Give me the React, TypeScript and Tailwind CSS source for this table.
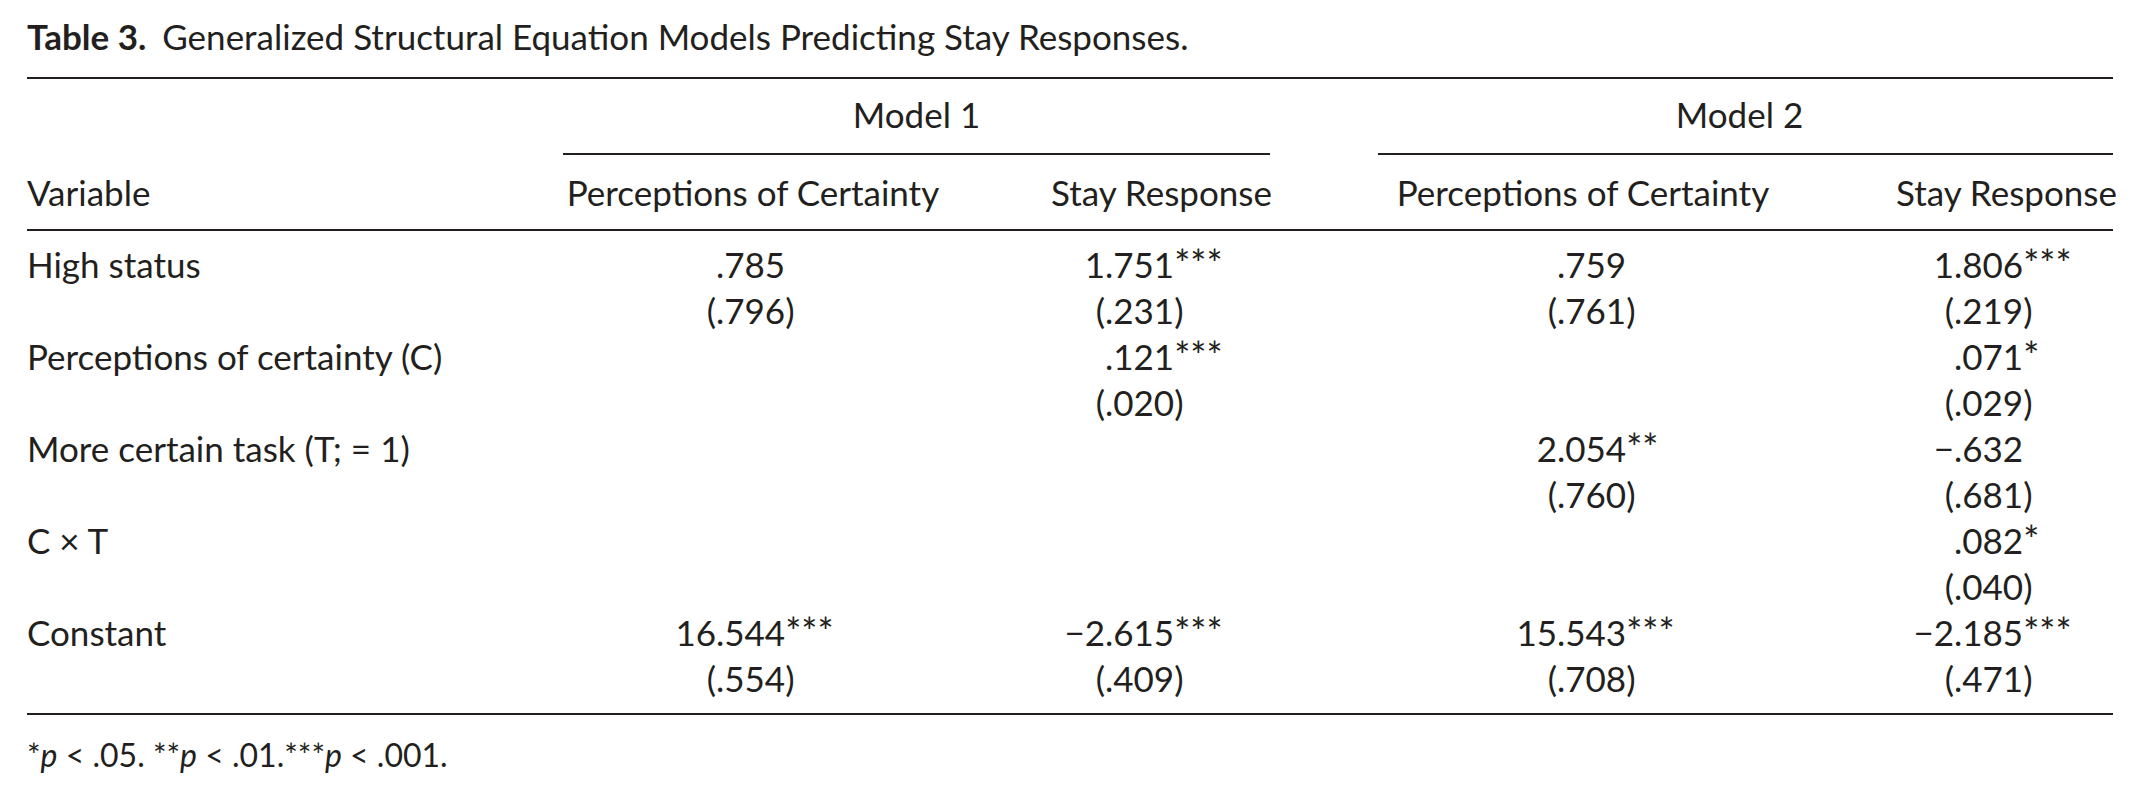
import React from 'react';

type Cell = { v: string; s?: string } | null;

interface Row {
  label: string;
  cells: [Cell, Cell, Cell, Cell];
  errors: [string | null, string | null, string | null, string | null];
}

const rows: Row[] = [
  {
    label: 'High status',
    cells: [{ v: '.785' }, { v: '1.751', s: '***' }, { v: '.759' }, { v: '1.806', s: '***' }],
    errors: ['(.796)', '(.231)', '(.761)', '(.219)'],
  },
  {
    label: 'Perceptions of certainty (C)',
    cells: [null, { v: '.121', s: '***' }, null, { v: '.071', s: '*' }],
    errors: [null, '(.020)', null, '(.029)'],
  },
  {
    label: 'More certain task (T; = 1)',
    cells: [null, null, { v: '2.054', s: '**' }, { v: '\u2212.632' }],
    errors: [null, null, '(.760)', '(.681)'],
  },
  {
    label: 'C \u00d7 T',
    cells: [null, null, null, { v: '.082', s: '*' }],
    errors: [null, null, null, '(.040)'],
  },
  {
    label: 'Constant',
    cells: [
      { v: '16.544', s: '***' },
      { v: '\u22122.615', s: '***' },
      { v: '15.543', s: '***' },
      { v: '\u22122.185', s: '***' },
    ],
    errors: ['(.554)', '(.409)', '(.708)', '(.471)'],
  },
];

// width of the part left of the decimal point, per column
const leftWidth = ['w-[153px]', 'w-[54px]', 'w-[179px]', 'w-[58px]'];

function Num({ text, stars, col }: { text: string; stars?: string; col: number }) {
  const dot = text.indexOf('.');
  const head = text.slice(0, dot);
  const tail = text.slice(dot);
  return (
    <div className="flex h-[46px] whitespace-nowrap">
      <span className={`${leftWidth[col]} shrink-0 text-right`}>{head}</span>
      <span>
        {tail}
        {stars && <span className="text-[38px] leading-none">{stars}</span>}
      </span>
    </div>
  );
}

export default function App() {
  return (
    <div className="min-h-[801px] w-[2139px] bg-white font-['Lato',sans-serif] text-[#231f20]">
      <div className="w-[2113px] pl-[27px]">
        <p className="pt-[16px] text-[35px] leading-[40px] whitespace-nowrap">
          <span className="font-bold">Table 3.</span>
          <span className="ml-[16px]">Generalized Structural Equation Models Predicting Stay Responses.</span>
        </p>

        {/* Header */}
        <div className="mt-[21px] border-t-2 border-b-2 border-[#231f20] text-[35px] leading-[46px]">
          <div className="grid grid-cols-[428px_380px_219px_410px_217px] gap-x-[108px]">
            <div />
            <div className="col-span-2 border-b-2 border-[#231f20] pt-[12px] pb-[16px] text-center">Model 1</div>
            <div className="col-span-2 border-b-2 border-[#231f20] pt-[12px] pb-[16px] pr-[12px] text-center">
              Model 2
            </div>
            <div className="py-[14px]">Variable</div>
            <div className="py-[14px] text-center whitespace-nowrap">Perceptions of Certainty</div>
            <div className="py-[14px] text-center whitespace-nowrap">Stay Response</div>
            <div className="py-[14px] text-center whitespace-nowrap">Perceptions of Certainty</div>
            <div className="py-[14px] text-center whitespace-nowrap">Stay Response</div>
          </div>
        </div>

        {/* Body */}
        <div className="grid grid-cols-[428px_380px_219px_410px_217px] auto-rows-[46px] gap-x-[108px] border-b-2 border-[#231f20] pt-[10px] pb-[12px] text-[35px] leading-[46px]">
          {rows.map((row) => (
            <React.Fragment key={row.label}>
              <div className="whitespace-nowrap">{row.label}</div>
              {row.cells.map((c, i) => (
                <div key={`v${i}`}>{c && <Num text={c.v} stars={c.s} col={i} />}</div>
              ))}
              <div />
              {row.errors.map((e, i) => (
                <div key={`e${i}`}>{e && <Num text={e} col={i} />}</div>
              ))}
            </React.Fragment>
          ))}
        </div>

        <p className="mt-[22px] text-[32px] leading-[36px] whitespace-nowrap">
          *<span className="italic">p</span> &lt; .05. **<span className="italic">p</span> &lt; .01.***
          <span className="italic">p</span> &lt; .001.
        </p>
      </div>
    </div>
  );
}
